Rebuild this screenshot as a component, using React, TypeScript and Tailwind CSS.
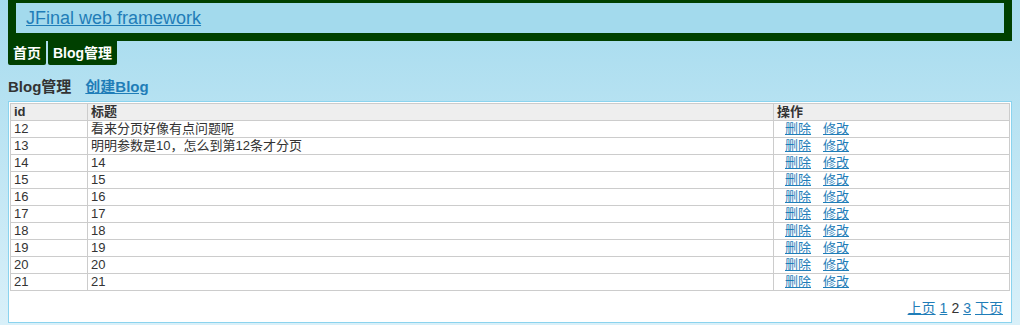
import React from 'react';

const rows: { id: number; title: string }[] = [
  { id: 12, title: '看来分页好像有点问题呢' },
  { id: 13, title: '明明参数是10，怎么到第12条才分页' },
  { id: 14, title: '14' },
  { id: 15, title: '15' },
  { id: 16, title: '16' },
  { id: 17, title: '17' },
  { id: 18, title: '18' },
  { id: 19, title: '19' },
  { id: 20, title: '20' },
  { id: 21, title: '21' },
];

const font = "font-['Liberation_Sans','Noto_Sans_CJK_SC',sans-serif]";

const App: React.FC = () => {
  return (
    <div className={`min-h-screen w-full bg-gradient-to-b from-[#a5dbee] to-[#d9f0f9] px-2 ${font}`}>
      {/* header */}
      <div className="h-[41px] border-x-8 border-t-[3px] border-b-8 border-[#004000] bg-[#a3daed] pl-[10px] flex items-center">
        <a href="#" className="text-[18px] leading-none text-[#1f7db8] underline">
          JFinal web framework
        </a>
      </div>

      {/* nav */}
      <div className="flex gap-[2px]">
        <a href="#" className="h-[24px] px-[5px] flex items-center bg-[#004000] text-white text-[14px] font-bold rounded-b-[2px]">
          首页
        </a>
        <a href="#" className="h-[24px] px-[5px] flex items-center bg-[#004000] text-white text-[14px] font-bold rounded-b-[2px]">
          Blog管理
        </a>
      </div>

      {/* heading */}
      <div className="pt-[12px] pb-[4px] h-[36px] flex items-center gap-[14px] text-[15px] leading-[20px] font-bold">
        <span className="text-[#333]">Blog管理</span>
        <a href="#" className="text-[#1f7db8] underline">创建Blog</a>
      </div>

      {/* content box */}
      <div className="h-[222px] border border-[#8bd3ee] bg-white p-px">
        <table className="w-full border-collapse text-[13px] leading-[16px] text-[#333]">
          <thead>
            <tr className="bg-[#eeeeee]">
              <th className="w-[77px] border border-[#cccccc] px-[3px] h-[17px] text-left font-bold">id</th>
              <th className="w-[686px] border border-[#cccccc] px-[3px] h-[17px] text-left font-bold">标题</th>
              <th className="border border-[#cccccc] px-[3px] h-[17px] text-left font-bold">操作</th>
            </tr>
          </thead>
          <tbody>
            {rows.map((r) => (
              <tr key={r.id}>
                <td className="border border-[#cccccc] px-[3px] h-[17px]">{r.id}</td>
                <td className="border border-[#cccccc] px-[3px] h-[17px]">{r.title}</td>
                <td className="border border-[#cccccc] pl-[11px] h-[17px]">
                  <span className="flex gap-[12px]">
                    <a href="#" className="text-[#1f7db8] underline">删除</a>
                    <a href="#" className="text-[#1f7db8] underline">修改</a>
                  </span>
                </td>
              </tr>
            ))}
          </tbody>
        </table>
        <div className="h-[32px] flex items-center justify-end gap-[4px] pr-[7px] pt-[2px] text-[14px]">
          <a href="#" className="text-[#1f7db8] underline">上页</a>
          <a href="#" className="text-[#1f7db8] underline">1</a>
          <span className="text-[#333]">2</span>
          <a href="#" className="text-[#1f7db8] underline">3</a>
          <a href="#" className="text-[#1f7db8] underline">下页</a>
        </div>
      </div>
    </div>
  );
};

export default App;
